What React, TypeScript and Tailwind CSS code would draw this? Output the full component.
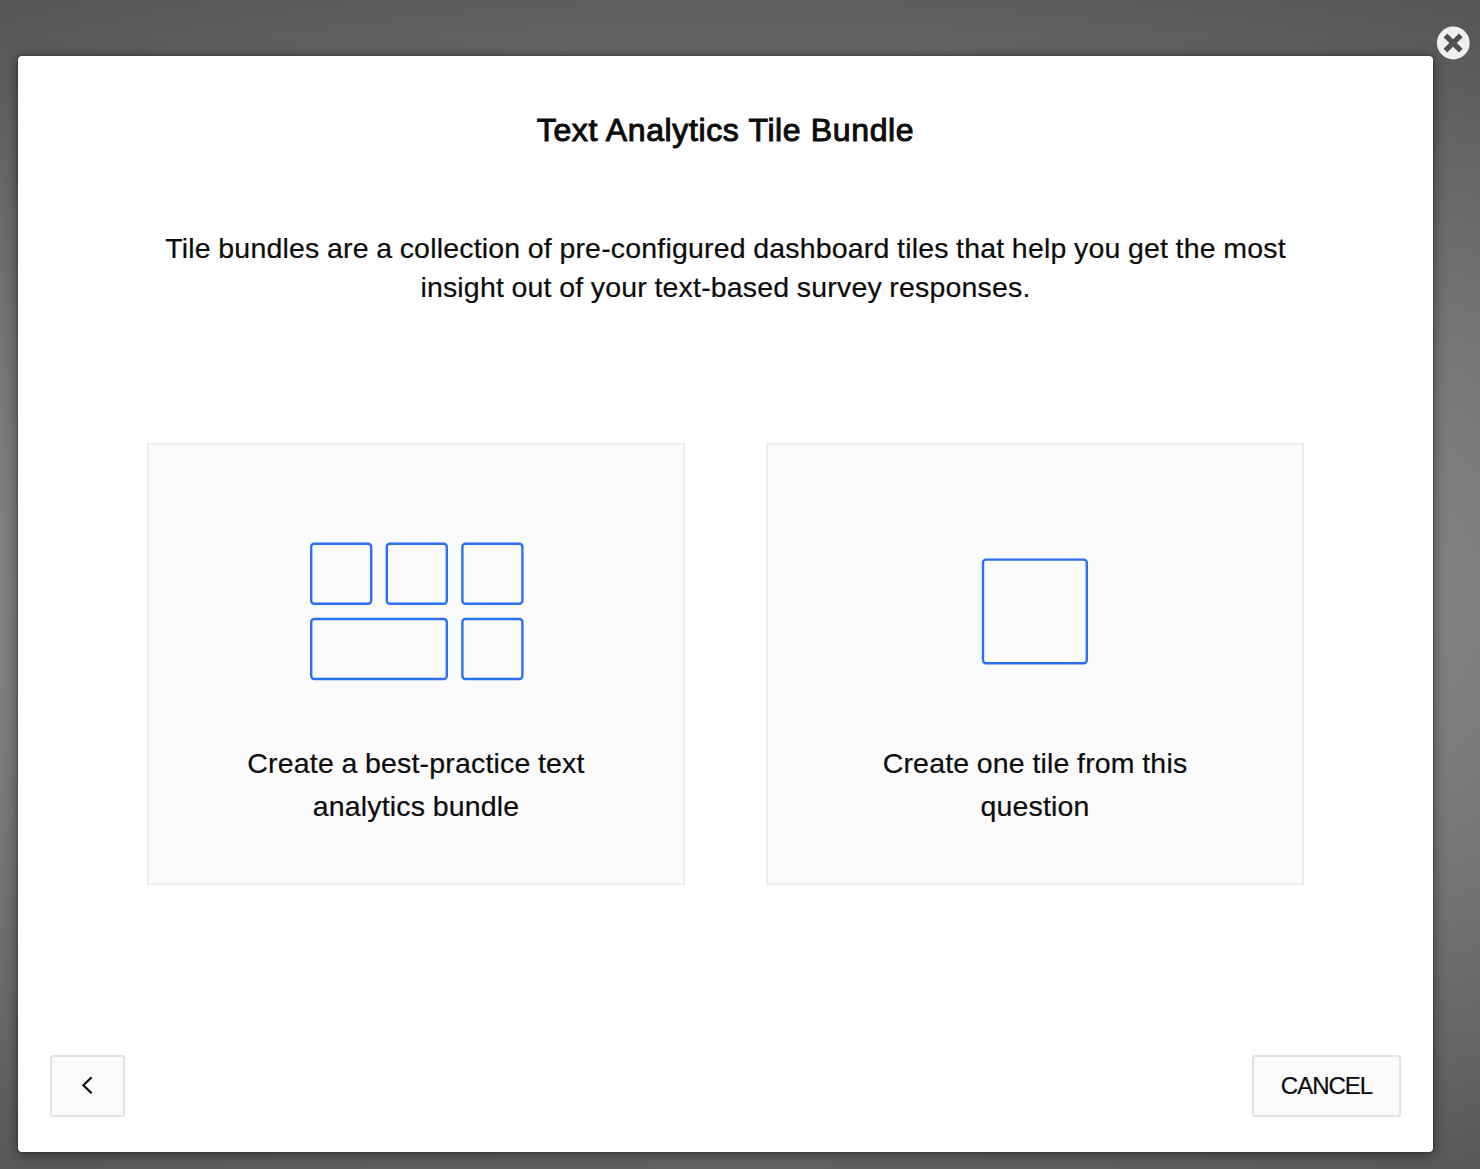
import * as React from "react";

function BundleIcon() {
  return (
    <svg width="216" height="140" viewBox="0 0 216 140" fill="none" stroke="#2a70f5" strokeWidth="2.4">
      <rect x="3.2" y="2.7" width="60" height="60" rx="3" />
      <rect x="78.8" y="2.7" width="60" height="60" rx="3" />
      <rect x="154.4" y="2.7" width="60" height="60" rx="3" />
      <rect x="3.2" y="78" width="135.6" height="60" rx="3" />
      <rect x="154.4" y="78" width="60" height="60" rx="3" />
    </svg>
  );
}

function SingleTileIcon() {
  return (
    <svg width="108" height="108" viewBox="0 0 108 108" fill="none" stroke="#2a70f5" strokeWidth="2.4">
      <rect x="2" y="2.6" width="103.8" height="103.6" rx="3" />
    </svg>
  );
}

interface OptionCardProps {
  icon: React.ReactNode;
  children: React.ReactNode;
}

function OptionCard({ icon, children }: OptionCardProps) {
  return (
    <button className="flex h-[442px] w-[538px] flex-col items-center border-2 border-[#ededed] bg-[#fbfbfb]">
      <span className="mt-[76px] flex h-[180px] items-center justify-center">{icon}</span>
      <span className="mt-[41px] text-[28.5px] leading-[43px] tracking-[0.18px] [word-spacing:-0.6px] [-webkit-text-stroke:0.2px_#0c0c0c]">
        {children}
      </span>
    </button>
  );
}

export default function App() {
  return (
    <div className="relative h-[1169px] w-[1480px] overflow-hidden bg-[radial-gradient(ellipse_1630px_720px_at_740px_600px,#a6a6a6_0%,#505050_100%)] pt-[56px] pl-[18px] font-['Liberation_Sans',Arial,sans-serif] text-[#0c0c0c]">
      {/* Close */}
      <button aria-label="Close" className="absolute top-[26px] left-[1436px]">
        <svg className="block" width="34" height="34" viewBox="0 0 34 34">
          <circle cx="17.3" cy="17" r="16.4" fill="#efefef" />
          <path d="M9.4 9.3 24.8 24.7 M24.8 9.3 9.4 24.7" stroke="#4f4f4f" strokeWidth="5.2" />
        </svg>
      </button>

      <div className="flex h-[1096px] w-[1415px] flex-col items-center rounded-[4px] bg-white shadow-[0_2px_14px_rgba(0,0,0,0.5),0_0_2px_rgba(0,0,0,0.6)]">
        <h1 className="mt-[54px] text-[32px] leading-[40px] tracking-[0.63px] [-webkit-text-stroke:1px_#0c0c0c]">
          Text Analytics Tile Bundle
        </h1>
        <p className="mt-[79px] text-center text-[28.5px] leading-[39px] tracking-[0.18px] [word-spacing:-0.6px] [-webkit-text-stroke:0.2px_#0c0c0c]">
          Tile bundles are a collection of pre-configured dashboard tiles that help you get the most
          <br />
          insight out of your text-based survey responses.
        </p>

        {/* Options */}
        <div className="mt-[136px] flex gap-[81px]">
          <OptionCard icon={<BundleIcon />}>
            Create a best-practice text
            <br />
            analytics bundle
          </OptionCard>
          <OptionCard icon={<SingleTileIcon />}>
            Create one tile from this
            <br />
            question
          </OptionCard>
        </div>

        {/* Footer */}
        <div className="mt-auto mb-[35px] flex w-full justify-between px-8">
          <button
            aria-label="Back"
            className="flex h-[62px] w-[75px] items-center justify-center rounded-[3px] border-2 border-[#e3e3e3] bg-[#fafafa]"
          >
            <svg width="14" height="20" viewBox="0 0 14 20" fill="none" stroke="#111111" strokeWidth="2.3">
              <path d="M10.6 1.2 2.4 9.2 10.6 17.2" />
            </svg>
          </button>
          <button className="h-[62px] w-[149px] rounded-[3px] border-2 border-[#e3e3e3] bg-[#fafafa] text-[24px] tracking-[-1px] [-webkit-text-stroke:0.2px_#0c0c0c]">
            CANCEL
          </button>
        </div>
      </div>
    </div>
  );
}
